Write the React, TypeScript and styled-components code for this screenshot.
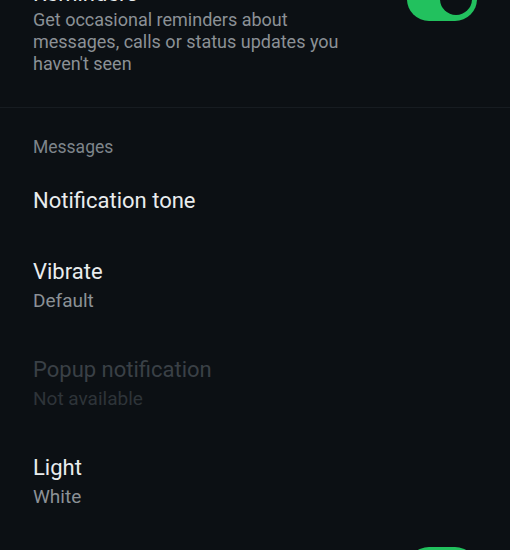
import React from 'react';
import styled, { createGlobalStyle } from 'styled-components';

const GlobalStyle = createGlobalStyle`
  html, body {
    margin: 0;
    padding: 0;
    background-color: #0c1014;
    overflow: hidden;
  }
`;

const Page = styled.div`
  width: 510px;
  height: 550px;
  overflow: hidden;
  background-color: #0c1014;
  font-family: Roboto, 'Noto Sans', sans-serif;
`;

// the first row is scrolled partly out of view
const Scrolled = styled.div<{ $offset?: number }>`
  display: flex;
  flex-direction: column;
  margin-top: ${(p) => p.$offset ?? 0}px;
`;

const Row = styled.div<{ $end?: boolean }>`
  display: flex;
  flex-direction: row;
  align-items: flex-start;
  justify-content: ${(p) => (p.$end ? 'flex-end' : 'space-between')};
  padding: 22.5px 33px;
`;

const TopRow = styled(Row)`
  padding: 0 33px 32px 33px;
`;

const TextCol = styled.div`
  display: flex;
  flex-direction: column;
  gap: 5px;
`;

const Title = styled.div<{ $disabled?: boolean }>`
  font-size: 22px;
  line-height: 26px;
  color: ${(p) => (p.$disabled ? '#3a4046' : '#e9ecee')};
`;

const Subtitle = styled.div<{ $disabled?: boolean; $size?: number }>`
  font-size: ${(p) => p.$size ?? 19}px;
  line-height: 22px;
  color: ${(p) => (p.$disabled ? '#2e3439' : '#8b9196')};
  max-width: 320px;
`;

const Description = styled(Subtitle)`
  margin-top: -3px;
`;

const Divider = styled.hr`
  margin: 0;
  border: 0;
  height: 1px;
  background-color: #171c21;
`;

const Header = styled.div`
  padding: 28px 33px 7px 33px;
  font-size: 17.5px;
  line-height: 22px;
  color: #7e858b;
`;

const Toggle = styled.div<{ $on?: boolean; $shift?: number }>`
  flex: none;
  width: 70px;
  height: 44px;
  border-radius: 22px;
  margin-top: ${(p) => p.$shift ?? 0}px;
  background-color: ${(p) => (p.$on ? '#22c15e' : '#1c5c3c')};
  display: flex;
  align-items: center;
  justify-content: ${(p) => (p.$on ? 'flex-end' : 'flex-start')};
  padding: 0 5px;
  box-sizing: border-box;
`;

const Knob = styled.div`
  width: 32px;
  height: 32px;
  border-radius: 50%;
  background-color: #0c1014;
`;

type Item = { title: string; sub?: string; disabled?: boolean };

const items: Item[] = [
  { title: 'Notification tone' },
  { title: 'Vibrate', sub: 'Default' },
  { title: 'Popup notification', sub: 'Not available', disabled: true },
  { title: 'Light', sub: 'White' },
];

export default function App() {
  return (
    <Page>
      <GlobalStyle />
      <Scrolled $offset={-19}>
        <TopRow>
          <TextCol>
            <Title>Reminders</Title>
            <Description $size={18}>
              Get occasional reminders about messages, calls or status updates you haven't seen
            </Description>
          </TextCol>
          <Toggle $on $shift={-4}>
            <Knob />
          </Toggle>
        </TopRow>
      </Scrolled>
      <Divider />
      <Header>Messages</Header>
      {items.map((it) => (
        <Row key={it.title}>
          <TextCol>
            <Title $disabled={it.disabled}>{it.title}</Title>
            {it.sub && <Subtitle $disabled={it.disabled}>{it.sub}</Subtitle>}
          </TextCol>
        </Row>
      ))}
      <Row $end>
        <Toggle $on $shift={-6}>
          <Knob />
        </Toggle>
      </Row>
    </Page>
  );
}
